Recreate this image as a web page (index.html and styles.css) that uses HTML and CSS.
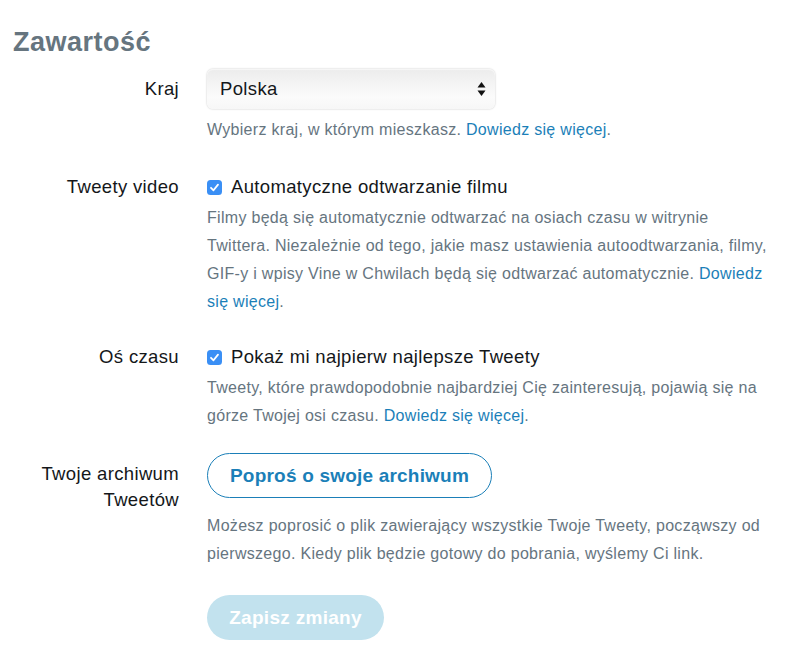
FILE: index.html
```html
<!DOCTYPE html>
<html lang="pl">
<head>
<meta charset="utf-8">
<title>Zawartość</title>
<link rel="stylesheet" href="styles.css">
</head>
<body>
<main class="page">
  <h2 class="heading">Zawartość</h2>

  <div class="row row-country">
    <div class="label">Kraj</div>
    <div class="field">
      <div class="select">
        <span class="select-value">Polska</span>
        <svg class="select-arrows" width="9" height="16" viewBox="0 0 9 16"><path d="M4.5 1 L8.5 6.5 H0.5 Z" fill="#111"/><path d="M4.5 15 L8.5 9.5 H0.5 Z" fill="#111"/></svg>
      </div>
      <p class="help help-select">Wybierz kraj, w którym mieszkasz. <a href="#">Dowiedz się więcej</a>.</p>
    </div>
  </div>

  <div class="row row-video">
    <div class="label">Tweety video</div>
    <div class="field">
      <label class="check">
        <svg class="checkbox" width="15" height="15" viewBox="0 0 15 15"><rect x="0" y="0" width="15" height="15" rx="3.5" fill="#3a8ff5"/><path d="M4 7.8 L6.5 10.3 L11 4.6" fill="none" stroke="#fff" stroke-width="1.8" stroke-linecap="round" stroke-linejoin="round"/></svg>
        <span>Automatyczne odtwarzanie filmu</span>
      </label>
      <p class="help">Filmy będą się automatycznie odtwarzać na osiach czasu w witrynie Twittera. Niezależnie od tego, jakie masz ustawienia autoodtwarzania, filmy, GIF-y i wpisy Vine w Chwilach będą się odtwarzać automatycznie. <a href="#">Dowiedz się więcej</a>.</p>
    </div>
  </div>

  <div class="row row-timeline">
    <div class="label">Oś czasu</div>
    <div class="field">
      <label class="check">
        <svg class="checkbox" width="15" height="15" viewBox="0 0 15 15"><rect x="0" y="0" width="15" height="15" rx="3.5" fill="#3a8ff5"/><path d="M4 7.8 L6.5 10.3 L11 4.6" fill="none" stroke="#fff" stroke-width="1.8" stroke-linecap="round" stroke-linejoin="round"/></svg>
        <span>Pokaż mi najpierw najlepsze Tweety</span>
      </label>
      <p class="help">Tweety, które prawdopodobnie najbardziej Cię zainteresują, pojawią się na górze Twojej osi czasu. <a href="#">Dowiedz się więcej</a>.</p>
    </div>
  </div>

  <div class="row row-archive">
    <div class="label label-archive">Twoje archiwum Tweetów</div>
    <div class="field">
      <button class="btn-outline" type="button">Poproś o swoje archiwum</button>
      <p class="help help-archive">Możesz poprosić o plik zawierający wszystkie Twoje Tweety, począwszy od pierwszego. Kiedy plik będzie gotowy do pobrania, wyślemy Ci link.</p>
    </div>
  </div>

  <div class="row row-save">
    <div class="label"></div>
    <div class="field">
      <button class="btn-save" type="button">Zapisz zmiany</button>
    </div>
  </div>
</main>
</body>
</html>
```

FILE: styles.css
```css
html, body {
  margin: 0;
  padding: 0;
  background: #fff;
}

body {
  font-family: "Liberation Sans", Arial, sans-serif;
  color: #14171a;
}

.page {
  padding: 26px 0 0 0;
}

.heading {
  margin: 0 0 0 13px;
  font-size: 27px;
  line-height: 32px;
  letter-spacing: 0.5px;
  font-weight: bold;
  color: #66757f;
}

.row {
  display: grid;
  grid-template-columns: 179px 565px;
  column-gap: 28px;
}

.label {
  text-align: right;
  font-size: 18.5px;
  letter-spacing: 0.35px;
  line-height: 28px;
  color: #14171a;
}

.field {
  min-width: 0;
}

.row-country {
  margin-top: 11px;
}

.row-country .label {
  padding-top: 6px;
}

.select {
  box-sizing: border-box;
  width: 288px;
  height: 40px;
  border-radius: 6px;
  background: linear-gradient(#ececec, #fbfbfb 70%, #f7f7f7);
  box-shadow: 0 0 2px rgba(0,0,0,0.25), inset 0 1px 1px rgba(255,255,255,0.6);
  display: flex;
  align-items: center;
  justify-content: space-between;
  padding: 0 9px 0 13px;
}

.select-value {
  font-size: 18.5px;
  letter-spacing: 0.35px;
  color: #14171a;
}

.select-arrows {
  display: block;
}

.help {
  margin: 0;
  font-size: 16px;
  letter-spacing: 0.3px;
  line-height: 28px;
  color: #66757f;
}

.help a {
  color: #1b7fb8;
  text-decoration: none;
}

.help-select {
  margin-top: 7px;
}

.row-video {
  margin-top: 29px;
}

.check {
  display: flex;
  align-items: center;
  gap: 9px;
  font-size: 18.5px;
  letter-spacing: 0.35px;
  line-height: 28px;
  color: #14171a;
}

.checkbox {
  display: block;
  flex: none;
}

.row-video .help,
.row-timeline .help {
  margin-top: 3px;
}

.row-timeline {
  margin-top: 27px;
}

.row-archive {
  margin-top: 23px;
}

.label-archive {
  line-height: 26px;
  padding-top: 8px;
  padding-left: 20px;
}

.btn-outline {
  box-sizing: border-box;
  height: 45px;
  width: 285px;
  border: 1px solid #1b7fb8;
  border-radius: 23px;
  background: #fff;
  color: #1b7fb8;
  font-family: "Liberation Sans", Arial, sans-serif;
  font-weight: bold;
  font-size: 19px;
  letter-spacing: 0.2px;
  padding: 0;
  cursor: pointer;
}

.help-archive {
  margin-top: 14px;
}

.row-save {
  margin-top: 27px;
}

.btn-save {
  box-sizing: border-box;
  height: 45px;
  width: 177px;
  border: 0;
  border-radius: 23px;
  background: #c2e2ee;
  color: #fff;
  font-family: "Liberation Sans", Arial, sans-serif;
  font-weight: bold;
  font-size: 19px;
  letter-spacing: 0.3px;
  padding: 0;
}
```
